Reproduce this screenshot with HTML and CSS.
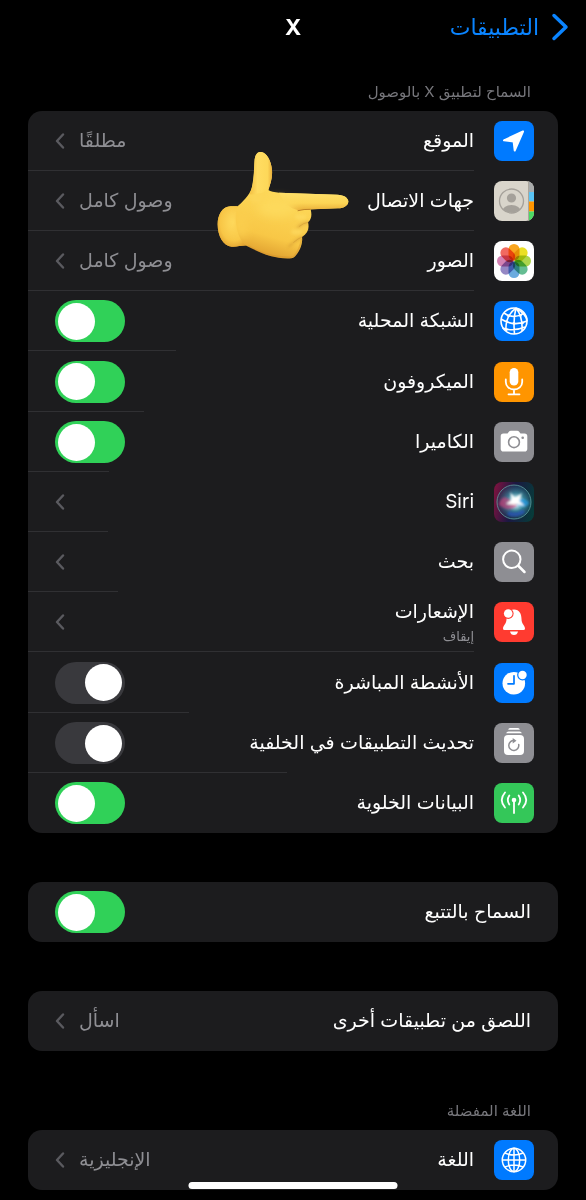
FILE: index.html
```html
<!DOCTYPE html>
<html lang="ar" dir="rtl">
<head>
<meta charset="utf-8">
<meta name="viewport" content="width=device-width, initial-scale=1">
<title>X</title>
<link rel="stylesheet" href="styles.css">
</head>
<body>
<header class="navbar">
  <a class="back" href="#apps">
    <svg class="back-arrow" viewBox="0 0 18 28" aria-hidden="true"><path d="M3 2.500 15 14 3 25.500"/></svg>
    <span>التطبيقات</span>
  </a>
  <h1 class="title">X</h1>
</header>

<main class="content">
  <section>
    <h2 class="caption">السماح لتطبيق X بالوصول</h2>
    <ul class="card card-access">
      <li class="row rule-full">
        <a class="cell" href="#location">
          <svg class="icon" viewBox="0 0 40 40" aria-hidden="true"><rect width="40" height="40" rx="8" fill="#007aff"/><path d="M29 10.500 10 19.300 19.600 20.400 20.700 29.500Z" fill="#fff" stroke="#fff" stroke-width="2" stroke-linejoin="round"/></svg>
          <span class="label">الموقع</span>
          <span class="value">مطلقًا</span>
          <svg class="chevron" viewBox="0 0 10 16" aria-hidden="true"><path d="M8 1.500 2 8 8 14.500"/></svg>
        </a>
      </li>
      <li class="row row-pointed rule-full">
        <a class="cell" href="#contacts">
          <svg class="icon" viewBox="0 0 40 40" aria-hidden="true">
            <defs><clipPath id="tile"><rect width="40" height="40" rx="8"/></clipPath><clipPath id="face"><circle cx="17.500" cy="20" r="11.800"/></clipPath></defs>
            <g clip-path="url(#tile)"><rect width="40" height="40" fill="#d9d5cb"/><rect x="35" width="5" height="11" fill="#a9abab"/><rect x="35" y="11" width="5" height="9.500" fill="#5ac4f5"/><rect x="35" y="20.500" width="5" height="10" fill="#ff9500"/><rect x="35" y="30.500" width="5" height="10" fill="#4cd964"/><path d="M34.500 0v40" stroke="#aaa69d"/></g>
            <g fill="#a5a19a"><circle cx="17.500" cy="17" r="4.600"/><ellipse cx="17.500" cy="31" rx="9.500" ry="7" clip-path="url(#face)"/></g><circle cx="17.500" cy="20" r="12" fill="none" stroke="#a5a19a" stroke-width="1.300"/>
          </svg>
          <span class="label">جهات الاتصال</span>
          <span class="value">وصول كامل</span>
          <svg class="chevron" viewBox="0 0 10 16" aria-hidden="true"><path d="M8 1.500 2 8 8 14.500"/></svg>
        </a>
        <svg class="hand" viewBox="0 0 435 360" aria-hidden="true">
          <defs>
            <linearGradient id="skin" x1="0.700" y1="0" x2="0.350" y2="1"><stop offset="0" stop-color="#ffe16a"/><stop offset="0.500" stop-color="#fcd555"/><stop offset="0.800" stop-color="#f8c746"/><stop offset="1" stop-color="#dd9b2c"/></linearGradient>
            <linearGradient id="thumb" x1="0" x2="1"><stop offset="0" stop-color="#f3bf42"/><stop offset="0.350" stop-color="#ffdc62"/><stop offset="0.800" stop-color="#fdd859"/><stop offset="1" stop-color="#ebb03c"/></linearGradient>
            <linearGradient id="finger" x1="0" y1="0" x2="0" y2="1"><stop offset="0" stop-color="#ffe06a"/><stop offset="0.600" stop-color="#fcd555"/><stop offset="1" stop-color="#eab13c"/></linearGradient>
            <radialGradient id="wrist" cx="0.550" cy="0.400" r="0.650"><stop offset="0" stop-color="#ffdc60"/><stop offset="0.700" stop-color="#f8c646"/><stop offset="1" stop-color="#e2a331"/></radialGradient>
            <filter id="soft" x="-50%" y="-50%" width="200%" height="200%"><feGaussianBlur stdDeviation="5"/></filter>
            <filter id="blend" x="-50%" y="-50%" width="200%" height="200%"><feGaussianBlur stdDeviation="12"/></filter>
          </defs>
          <path fill="url(#skin)" d="M83 184C95 171 119 154 126 125 132 98 132 68 134 43 136 28 143 20 153 21 170 23 184 47 186 76 188 99 180 120 175 135 181 140 193 142 207 143L382 149C402 150 414 158 415 169 415 182 402 190 384 190L302 193C306 209 305 223 294 232 299 251 293 265 276 276 279 299 267 322 254 335 245 343 224 341 206 338 167 333 135 314 109 302 94 301 82 306 65 305 39 303 23 273 23 238 23 209 37 185 62 184Z"/>
          <path fill="url(#thumb)" d="M119 148C136 110 131 70 134 43 136 28 143 20 153 21 170 23 184 47 186 76 188 99 180 120 175 135Q147 150 119 148Z"/>
          <path fill="url(#finger)" d="M207 143 382 149C402 150 414 158 415 169 415 182 402 190 384 190L262 195Q230 190 207 143Z"/>
          <ellipse cx="200" cy="187" rx="55" ry="28" fill="#fdd95c" filter="url(#blend)"/>
          <ellipse cx="144" cy="160" rx="22" ry="14" fill="#fcd659" filter="url(#soft)"/>
          <path fill="url(#wrist)" d="M83 184C72 205 75 278 109 302 94 301 82 306 65 305 39 303 23 273 23 238 23 209 37 185 62 184Z"/>
          <ellipse cx="94" cy="240" rx="18" ry="42" fill="#fbce4d" filter="url(#blend)"/>
          <g fill="none" stroke="#bd8127" stroke-linecap="round"><path d="M264 197q18-5 37-4" stroke-width="3"/><path d="M294 232q-21 3-31 16M276 276q-19 9-39 28" stroke-width="5" opacity=".5" filter="url(#soft)"/><path d="M294 232q-14 2-26 12M276 276q-12 4-25 16" stroke-width="2" opacity=".5"/></g>
          <path d="M115 302Q160 330 206 335T254 331Q269 315 275 282" fill="none" stroke="#ce8b2a" stroke-width="5" opacity=".35"/>
          <g fill="#ffe06a" opacity=".5" filter="url(#soft)"><ellipse cx="272" cy="216" rx="18" ry="8"/><ellipse cx="260" cy="261" rx="18" ry="8"/></g>
        </svg>
      </li>
      <li class="row rule-full">
        <a class="cell" href="#photos">
          <svg class="icon" viewBox="0 0 40 40" aria-hidden="true"><rect width="40" height="40" rx="8" fill="#fff"/><g class="petals"><rect x="14.500" y="3" width="11" height="16.500" rx="5.500" fill="#f9a51f"/><rect x="14.500" y="3" width="11" height="16.500" rx="5.500" fill="#ebdf23" transform="rotate(45 20 20)"/><rect x="14.500" y="3" width="11" height="16.500" rx="5.500" fill="#add54b" transform="rotate(90 20 20)"/><rect x="14.500" y="3" width="11" height="16.500" rx="5.500" fill="#65bd92" transform="rotate(135 20 20)"/><rect x="14.500" y="3" width="11" height="16.500" rx="5.500" fill="#6babdf" transform="rotate(180 20 20)"/><rect x="14.500" y="3" width="11" height="16.500" rx="5.500" fill="#9588c4" transform="rotate(225 20 20)"/><rect x="14.500" y="3" width="11" height="16.500" rx="5.500" fill="#d482b3" transform="rotate(270 20 20)"/><rect x="14.500" y="3" width="11" height="16.500" rx="5.500" fill="#f16960" transform="rotate(315 20 20)"/></g></svg>
          <span class="label">الصور</span>
          <span class="value">وصول كامل</span>
          <svg class="chevron" viewBox="0 0 10 16" aria-hidden="true"><path d="M8 1.500 2 8 8 14.500"/></svg>
        </a>
      </li>
      <li class="row rule-network">
        <label class="cell">
          <svg class="icon" viewBox="0 0 40 40" aria-hidden="true"><rect width="40" height="40" rx="8" fill="#007aff"/><g fill="none" stroke="#fff" stroke-width="1.600"><circle cx="20" cy="20" r="13"/><path d="M22 7Q11 15 12 30M22 7Q19 18 20.500 33M22 7Q29 16 28 30M22 7Q33 14 33 20M10 12Q20 19 30.500 12M7 18Q20 26 33 20M8.500 27Q19 31 31 26"/></g><g fill="#fff"><circle cx="14.500" cy="15" r="1.300"/><circle cx="26.500" cy="14.500" r="1.300"/><circle cx="20" cy="22.500" r="1.400"/><circle cx="28.500" cy="22" r="1.300"/><circle cx="12.500" cy="28.500" r="1.300"/></g></svg>
          <span class="label">الشبكة المحلية</span>
          <input class="switch" type="checkbox" role="switch" checked>
        </label>
      </li>
      <li class="row rule-microphone">
        <label class="cell">
          <svg class="icon" viewBox="0 0 40 40" aria-hidden="true"><rect width="40" height="40" rx="8" fill="#ff9500"/><rect x="15.700" y="6" width="8.600" height="17.500" rx="4.300" fill="#fff"/><path d="M11.800 17.500v2.500a8.200 7.500 0 0 0 16.400 0v-2.500M20 27.500v4.500M14.500 32.300h11" fill="none" stroke="#fff" stroke-width="1.800" stroke-linecap="round"/></svg>
          <span class="label">الميكروفون</span>
          <input class="switch" type="checkbox" role="switch" checked>
        </label>
      </li>
      <li class="row rule-camera">
        <label class="cell">
          <svg class="icon" viewBox="0 0 40 40" aria-hidden="true"><rect width="40" height="40" rx="8" fill="#8e8e93"/><path d="M9.500 11.500h4L15.300 9.300q.6-.6 1.500-.6h6.400q.9 0 1.500.6l1.800 2.200h4a2.800 2.800 0 0 1 2.800 2.800v12.400a2.800 2.800 0 0 1-2.800 2.800H9.500a2.800 2.800 0 0 1-2.800-2.800V14.300a2.800 2.800 0 0 1 2.800-2.800Z" fill="#fff"/><circle cx="20" cy="20.200" r="5.400" fill="none" stroke="#8e8e93" stroke-width="1.600"/><circle cx="28.700" cy="15.800" r="1.300" fill="#8e8e93"/></svg>
          <span class="label">الكاميرا</span>
          <input class="switch" type="checkbox" role="switch" checked>
        </label>
      </li>
      <li class="row rule-siri">
        <a class="cell" href="#siri">
          <svg class="icon" viewBox="0 0 40 40" aria-hidden="true">
            <defs>
              <linearGradient id="siri-base" x1="0" y1="0.400" x2="1" y2="0.600"><stop offset="0" stop-color="#75133f"/><stop offset="0.450" stop-color="#1b1742"/><stop offset="1" stop-color="#073b3a"/></linearGradient>
              <radialGradient id="siri-orb" cx="0.550" cy="0.500" r="0.550"><stop offset="0" stop-color="#fff"/><stop offset="0.180" stop-color="#d2faff"/><stop offset="0.500" stop-color="#4199ab" stop-opacity=".75"/><stop offset="1" stop-color="#173857" stop-opacity=".4"/></radialGradient>
              <filter id="glow"><feGaussianBlur stdDeviation="0.800"/></filter>
            </defs>
            <rect width="40" height="40" rx="8" fill="url(#siri-base)"/>
            <circle cx="20" cy="20" r="17" fill="url(#siri-orb)"/>
            <g filter="url(#glow)"><path d="M5 22Q8 12 15 17T25 22Q17 30 10 26T5 22Z" fill="#e0407f" opacity=".6"/><path d="M20 21Q30 13 35 21 31 29 20 21Z" fill="#229be8" opacity=".7"/><path d="M14 31Q22 35 30 29" stroke="#2752bd" stroke-width="4" fill="none" opacity=".7"/><path d="M16 10 21 16 28 11 25 19 31 24 22 22 12 22 18 18Z" fill="#fff"/></g>
            <circle cx="20" cy="20" r="17" fill="none" stroke="#66a9a7" stroke-opacity=".75"/>
          </svg>
          <span class="label">Siri</span>
          <svg class="chevron" viewBox="0 0 10 16" aria-hidden="true"><path d="M8 1.500 2 8 8 14.500"/></svg>
        </a>
      </li>
      <li class="row rule-search">
        <a class="cell" href="#search">
          <svg class="icon" viewBox="0 0 40 40" aria-hidden="true"><rect width="40" height="40" rx="8" fill="#8e8e93"/><g fill="none" stroke="#fff" stroke-linecap="round"><circle cx="17.800" cy="17.300" r="8.700" stroke-width="2"/><path d="m24.500 24 6 6" stroke-width="2.500"/></g></svg>
          <span class="label">بحث</span>
          <svg class="chevron" viewBox="0 0 10 16" aria-hidden="true"><path d="M8 1.500 2 8 8 14.500"/></svg>
        </a>
      </li>
      <li class="row rule-full">
        <a class="cell" href="#notifications">
          <svg class="icon" viewBox="0 0 40 40" aria-hidden="true"><rect width="40" height="40" rx="8" fill="#ff3b30"/><path d="M20 7.500C25.500 7.500 27.500 12 27.500 17 27.500 22 31 23.500 31 26.500Q31 28 29.500 28H10.500Q9 28 9 26.500C9 23.500 12.500 22 12.500 17 12.500 12 15 7.500 20 7.500Z" fill="#fff"/><path d="M16 29.500h8q-.8 3.500-4 3.500t-4-3.500Z" fill="#fff"/><circle cx="14.200" cy="11.500" r="5.400" fill="#ff3b30"/><circle cx="14.200" cy="11.500" r="4.300" fill="#fff"/></svg>
          <span class="label">الإشعارات<small class="note">إيقاف</small></span>
          <svg class="chevron" viewBox="0 0 10 16" aria-hidden="true"><path d="M8 1.500 2 8 8 14.500"/></svg>
        </a>
      </li>
      <li class="row rule-live">
        <label class="cell">
          <svg class="icon" viewBox="0 0 40 40" aria-hidden="true"><rect width="40" height="40" rx="8" fill="#007aff"/><circle cx="19.800" cy="20.200" r="11.300" fill="#fff"/><path d="M20 12.800v8h-6" fill="none" stroke="#007aff" stroke-width="1.700" stroke-linecap="round" stroke-linejoin="round"/><circle cx="28.500" cy="12" r="5.400" fill="#007aff"/><circle cx="28.500" cy="12" r="4.200" fill="#fff"/></svg>
          <span class="label">الأنشطة المباشرة</span>
          <input class="switch" type="checkbox" role="switch">
        </label>
      </li>
      <li class="row rule-refresh">
        <label class="cell">
          <svg class="icon" viewBox="0 0 40 40" aria-hidden="true"><rect width="40" height="40" rx="8" fill="#8e8e93"/><rect x="10" y="12" width="20" height="20" rx="4" fill="#fff"/><path d="M12.200 10.300Q12.500 8.500 14.500 8.500h11q2 0 2.300 1.800ZM14.200 6.800Q14.500 5 16 5h8q1.500 0 1.800 1.800Z" fill="#fff"/><path d="M24.700 21.500A5 5 0 1 1 20.500 17.500" fill="none" stroke="#8e8e93" stroke-width="1.500" stroke-linecap="round"/><path d="m18.700 14.900 3.800 2.800-3.800 2.700Z" fill="#8e8e93"/></svg>
          <span class="label">تحديث التطبيقات في الخلفية</span>
          <input class="switch" type="checkbox" role="switch">
        </label>
      </li>
      <li class="row">
        <label class="cell">
          <svg class="icon" viewBox="0 0 40 40" aria-hidden="true"><rect width="40" height="40" rx="8" fill="#34c759"/><circle cx="20" cy="17" r="2.300" fill="#fff"/><g fill="none" stroke="#fff" stroke-width="1.800" stroke-linecap="round"><path d="M20 18v12M15.300 12.500Q12.300 17 15.300 21.500M24.700 12.500Q27.700 17 24.700 21.500M11 9.500Q4.500 17 11 24.500M29 9.500Q35.500 17 29 24.500"/></g></svg>
          <span class="label">البيانات الخلوية</span>
          <input class="switch" type="checkbox" role="switch" checked>
        </label>
      </li>
    </ul>
  </section>

  <section class="card">
    <div class="row">
      <label class="cell cell-plain">
        <span class="label">السماح بالتتبع</span>
        <input class="switch" type="checkbox" role="switch" checked>
      </label>
    </div>
  </section>

  <section class="card">
    <div class="row">
      <a class="cell cell-plain" href="#paste">
        <span class="label">اللصق من تطبيقات أخرى</span>
        <span class="value">اسأل</span>
        <svg class="chevron" viewBox="0 0 10 16" aria-hidden="true"><path d="M8 1.500 2 8 8 14.500"/></svg>
      </a>
    </div>
  </section>

  <section>
    <h2 class="caption">اللغة المفضلة</h2>
    <div class="card">
      <div class="row">
        <a class="cell" href="#language">
          <svg class="icon" viewBox="0 0 40 40" aria-hidden="true"><rect width="40" height="40" rx="8" fill="#007aff"/><g fill="none" stroke="#fff" stroke-width="1.500"><circle cx="20" cy="20" r="11.700"/><ellipse cx="20" cy="20" rx="5.700" ry="11.700"/><path d="M20 8.300v23.400M8.300 20h23.400M11 13Q20 17 29 13M11 27Q20 23 29 27"/></g></svg>
          <span class="label">اللغة</span>
          <span class="value">الإنجليزية</span>
          <svg class="chevron" viewBox="0 0 10 16" aria-hidden="true"><path d="M8 1.500 2 8 8 14.500"/></svg>
        </a>
      </div>
    </div>
  </section>
</main>
<div class="home-indicator"></div>
</body>
</html>
```

FILE: styles.css
```css
* {
  box-sizing: border-box;
}

body {
  margin: 0;
  background: #000;
  color: #fff;
  font-family: Inter, "DejaVu Sans", sans-serif;
  font-size: 19px;
  line-height: 28px;
}

h1,
h2,
ul {
  margin: 0;
  padding: 0;
  list-style: none;
}

a {
  color: inherit;
  text-decoration: none;
}

.navbar {
  display: grid;
  grid-template-columns: 1fr auto 1fr;
  align-items: center;
  height: 54px;
  padding: 0 17px;
}

.back {
  display: flex;
  align-items: center;
  justify-self: start;
  gap: 12px;
  color: #0a84ff;
  font-size: 22px;
}

.back-arrow {
  width: 18px;
  height: 28px;
}

.back-arrow path {
  fill: none;
  stroke: currentColor;
  stroke-width: 3.5;
  stroke-linecap: round;
  stroke-linejoin: round;
}

.title {
  font-size: 22px;
  font-weight: 700;
}

.content {
  display: flex;
  flex-direction: column;
  gap: 49px;
  padding: 27px 28px 10px;
}

.caption {
  padding: 0 27px 8px;
  color: #77777c;
  font-size: 15px;
  font-weight: 400;
  line-height: 22px;
}

.card {
  background: #1c1c1e;
  border-radius: 14px;
}

.row {
  position: relative;
  display: flex;
  min-height: 60px;
  background: linear-gradient(#303033, #303033) no-repeat left bottom / var(--rule, 0) 1px;
}

.card-access .row:nth-child(5n) {
  min-height: 61px;
}

.rule-full { --rule: calc(100% - 84px); }
.rule-network { --rule: 148px; }
.rule-microphone { --rule: 116px; }
.rule-camera { --rule: 81px; }
.rule-siri { --rule: 80px; }
.rule-search { --rule: 90px; }
.rule-live { --rule: 161px; }
.rule-refresh { --rule: 259px; }

.cell {
  display: flex;
  flex: 1;
  align-items: center;
  padding: 0 24px 0 27px;
}

.cell-plain {
  padding-right: 27px;
}

.icon {
  flex: none;
  width: 40px;
  height: 40px;
  margin-left: 20px;
}

.petals {
  isolation: isolate;
}

.petals rect {
  mix-blend-mode: multiply;
}

.label {
  flex: 1;
}

.note {
  display: block;
  color: #8e8e93;
  font-size: 13px;
  line-height: 20px;
}

.value {
  color: #8e8e93;
}

.chevron {
  flex: none;
  width: 10px;
  height: 16px;
  margin-right: 14px;
}

.chevron path {
  fill: none;
  stroke: #5a5a5f;
  stroke-width: 2.4;
  stroke-linecap: round;
  stroke-linejoin: round;
}

.switch {
  display: flex;
  flex: none;
  appearance: none;
  width: 70px;
  height: 42px;
  margin: 0;
  padding: 0 3px;
  align-items: center;
  background: #39393d;
  border-radius: 21px;
}

.switch::before {
  content: "";
  width: 37px;
  height: 37px;
  background: #fff;
  border-radius: 50%;
}

.switch:checked {
  justify-content: flex-end;
  background: #30d158;
}

.hand {
  position: absolute;
  top: -26px;
  right: 203px;
  width: 145px;
  height: 120px;
  pointer-events: none;
}

.home-indicator {
  position: fixed;
  bottom: 11px;
  left: 50%;
  width: 209px;
  height: 7px;
  background: #fff;
  border-radius: 4px;
  transform: translateX(-50%);
}
```
